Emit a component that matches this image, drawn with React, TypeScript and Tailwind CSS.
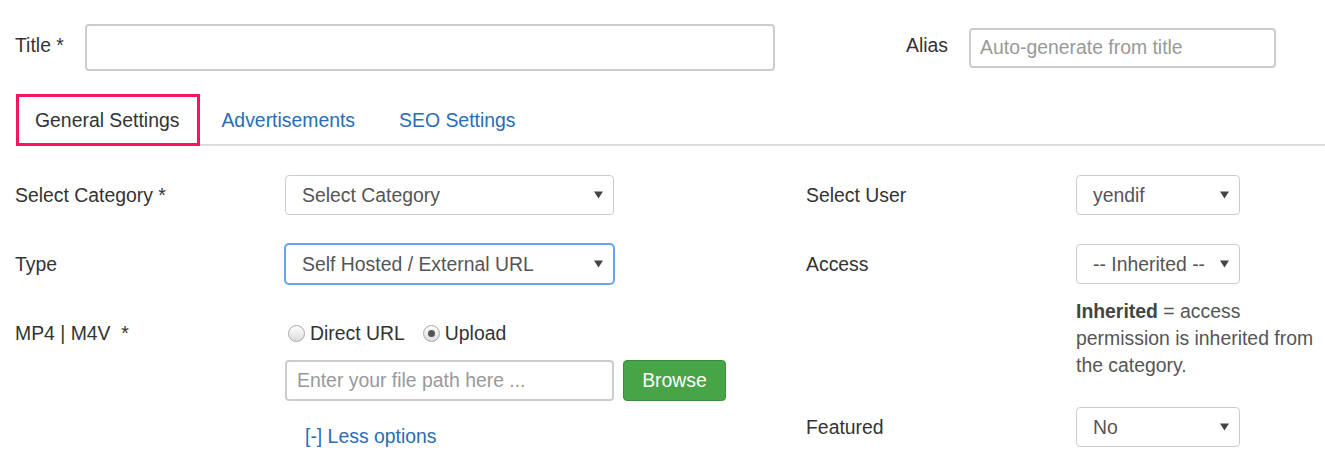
import React from 'react';

const Caret: React.FC = () => (
  <svg width="9" height="8" viewBox="0 0 9 8" className="shrink-0">
    <path d="M0 0.5 L9 0.5 L4.5 7.5 Z" fill="#444" />
  </svg>
);

const FakeSelect: React.FC<{ value: string; width: string; focused?: boolean }> = ({ value, width, focused }) => (
  <div
    className={`${width} h-[40px] flex items-center justify-between pl-[16px] pr-[10px] rounded-[4px] border bg-white text-[#555] ${
      focused ? 'border-[#6aa3ea] ring-1 ring-[#6aa3ea]' : 'border-[#ccc]'
    }`}
  >
    <span className="whitespace-nowrap">{value}</span>
    <Caret />
  </div>
);

const Radio: React.FC<{ checked?: boolean }> = ({ checked }) => (
  <span className="w-[17px] h-[17px] rounded-full border border-[#a9a9a9] bg-gradient-to-b from-[#fdfdfd] to-[#dcdcdc] flex items-center justify-center shrink-0">
    {checked && <span className="w-[7px] h-[7px] rounded-full bg-[#555]" />}
  </span>
);

const Row: React.FC<{ label: string; className?: string; children: React.ReactNode }> = ({ label, className = '', children }) => (
  <div className={`flex items-center h-[40px] ${className}`}>
    <div className="w-[270px] shrink-0 text-[#333]">{label}</div>
    {children}
  </div>
);

export default function App() {
  return (
    <div className="w-[1325px] h-[465px] bg-white overflow-hidden text-[19.4px] leading-[27px] text-[#333] font-['Liberation_Sans',Arial,sans-serif]">
      {/* Title / Alias */}
      <div className="flex items-center pt-[24px]">
        <div className="w-[85px] pl-[15px] mb-[4px]">Title *</div>
        <div className="w-[690px] h-[47px] rounded-[4px] border-2 border-[#ccc]" />
        <div className="ml-[131px] mb-[4px]">Alias</div>
        <div className="ml-[21px] w-[307px] h-[40px] rounded-[4px] border-2 border-[#ccc] flex items-center pl-[9px] text-[#999]">
          Auto-generate from title
        </div>
      </div>

      {/* Tabs */}
      <div className="mt-[23px] ml-[16px] flex items-end gap-[2px] border-b-2 border-[#ddd] h-[52px]">
        <div className="-mb-[2px] h-[52px] flex items-center pl-[16px] pr-[18px] border-[3px] border-[#f8145f] text-[#333] bg-white">
          General Settings
        </div>
        <div className="-mb-[2px] h-[52px] flex items-center pl-[19px] pr-[21px] text-[#2a6db3]">Advertisements</div>
        <div className="-mb-[2px] h-[52px] flex items-center px-[21px] text-[#2a6db3]">SEO Settings</div>
      </div>

      {/* Content */}
      <div className="flex">
        <div className="w-[791px] pl-[15px]">
          <Row label="Select Category *" className="mt-[29px]">
            <FakeSelect value="Select Category" width="w-[329px]" />
          </Row>
          <Row label="Type" className="mt-[29px]">
            <FakeSelect value="Self Hosted / External URL" width="w-[329px]" focused />
          </Row>
          <div className="flex items-start mt-[36px]">
            <div className="w-[270px] shrink-0 whitespace-pre">MP4 | M4V  *</div>
            <div className="flex flex-col">
              <div className="flex items-center h-[27px] pl-[3px]">
                <Radio />
                <span className="ml-[5px] text-[#333]">Direct URL</span>
                <span className="ml-[18px]">
                  <Radio checked />
                </span>
                <span className="ml-[5px] text-[#333]">Upload</span>
              </div>
              <div className="flex mt-[13px] gap-[9px]">
                <div className="w-[329px] h-[41px] rounded-[4px] border-2 border-[#ccc] flex items-center pl-[10px] text-[#999]">
                  Enter your file path here ...
                </div>
                <button className="w-[103px] h-[41px] rounded-[4px] bg-[#47a447] border border-[#3d8d3d] text-white">
                  Browse
                </button>
              </div>
              <a className="mt-[22px] ml-[20px] text-[#2a6db3]">[-] Less options</a>
            </div>
          </div>
        </div>

        <div className="flex-1 pl-[15px]">
          <Row label="Select User" className="mt-[29px]">
            <FakeSelect value="yendif" width="w-[164px]" />
          </Row>
          <Row label="Access" className="mt-[29px]">
            <FakeSelect value="-- Inherited --" width="w-[164px]" />
          </Row>
          <p className="ml-[270px] mt-[14px] w-[249px] text-[#555]">
            <b className="text-[#444]">Inherited</b> = access permission is inherited from the category.
          </p>
          <Row label="Featured" className="mt-[28px]">
            <FakeSelect value="No" width="w-[164px]" />
          </Row>
        </div>
      </div>
    </div>
  );
}
